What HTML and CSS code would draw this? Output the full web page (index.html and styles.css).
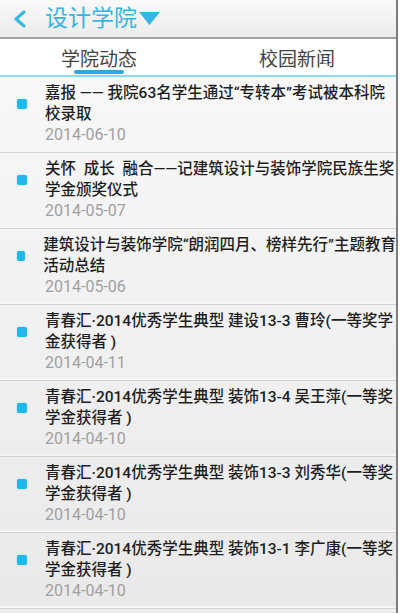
FILE: index.html
```html
<!DOCTYPE html>
<html lang="zh-CN">
<head>
    <meta charset="UTF-8">
    <meta name="viewport" content="width=device-width, initial-scale=1.0">
    <title>设计学院</title>
    <link rel="stylesheet" href="styles.css">
</head>
<body>
    <div class="app">
        <header class="topbar">
            <svg class="back" width="14" height="18" viewBox="0 0 14 18">
                <polyline points="11,2 3,9 11,16" fill="none" stroke="#36b6e2" stroke-width="3" stroke-linecap="round" stroke-linejoin="round"/>
            </svg>
            <h1 class="title">设计学院</h1>
            <svg class="caret" width="21" height="13" viewBox="0 0 21 13">
                <polygon points="0,0 21,0 10.5,13" fill="#36b6e2"/>
            </svg>
        </header>

        <nav class="tabs">
            <div class="tab active"><span>学院动态</span></div>
            <div class="tab"><span>校园新闻</span></div>
        </nav>

        <ul class="news">
            <li class="item">
                <div class="head"><i class="dot"></i><p class="name">嘉报 —— 我院63名学生通过“专转本”考试被本科院<br>校录取</p></div>
                <p class="date">2014-06-10</p>
            </li>
            <li class="item">
                <div class="head"><i class="dot"></i><p class="name">关怀&nbsp; 成长&nbsp; 融合——记建筑设计与装饰学院民族生奖<br>学金颁奖仪式</p></div>
                <p class="date">2014-05-07</p>
            </li>
            <li class="item">
                <div class="head"><i class="dot"></i><p class="name">建筑设计与装饰学院“朗润四月、榜样先行”主题教育<br>活动总结</p></div>
                <p class="date">2014-05-06</p>
            </li>
            <li class="item">
                <div class="head"><i class="dot"></i><p class="name">青春汇·2014优秀学生典型 建设13-3 曹玲(一等奖学<br>金获得者 )</p></div>
                <p class="date">2014-04-11</p>
            </li>
            <li class="item">
                <div class="head"><i class="dot"></i><p class="name">青春汇·2014优秀学生典型 装饰13-4 吴王萍(一等奖<br>学金获得者 )</p></div>
                <p class="date">2014-04-10</p>
            </li>
            <li class="item">
                <div class="head"><i class="dot"></i><p class="name">青春汇·2014优秀学生典型 装饰13-3 刘秀华(一等奖<br>学金获得者 )</p></div>
                <p class="date">2014-04-10</p>
            </li>
            <li class="item">
                <div class="head"><i class="dot"></i><p class="name">青春汇·2014优秀学生典型 装饰13-1 李广康(一等奖<br>学金获得者 )</p></div>
                <p class="date">2014-04-10</p>
            </li>
        </ul>
    </div>
</body>
</html>
```

FILE: styles.css
```css
body {
    margin: 0;
    background: #ffffff;
    font-family: Roboto, "Noto Sans CJK SC", sans-serif;
}

.app {
    width: 396px;
    height: 613px;
    border-right: 2px solid #7d7d7d;
    overflow: hidden;
    background: #ededed;
}

.topbar {
    height: 37px;
    display: flex;
    align-items: center;
    background: linear-gradient(#f9f9f9, #ececec);
    border-bottom: 2px solid #a2a2a2;
}

.back {
    margin-left: 13px;
}

.title {
    margin: 0 0 0 18px;
    font-size: 23px;
    font-weight: normal;
    color: #36b6e2;
    line-height: 1;
}

.caret {
    margin-left: 2px;
}

.tabs {
    display: flex;
    height: 36px;
    background: #ffffff;
    border-bottom: 2px solid #8fdcf2;
}

.tab {
    flex: 1;
    display: flex;
    justify-content: center;
    align-items: center;
    position: relative;
    font-size: 19px;
    color: #444444;
}

.tab.active::after {
    content: "";
    position: absolute;
    bottom: 1px;
    left: 74px;
    width: 50px;
    height: 4px;
    border-radius: 2px;
    background: #2ea7dc;
}

.news {
    list-style: none;
    margin: 0;
    padding: 0;
    background: linear-gradient(#f8f8f8, #e9e9e9);
}

.item {
    height: 76px;
    box-sizing: border-box;
    padding-top: 6px;
    border-bottom: 1px solid #d3d3d3;
    box-shadow: inset 0 -2px 0 #f6f6f6;
}

.head {
    display: flex;
    align-items: center;
}

.dot {
    width: 10px;
    height: 10px;
    margin: 0 18px 0 17px;
    border-radius: 2px;
    background: #1cb9ea;
    box-shadow: 0 0 2px #8ee0f6;
}

.name {
    margin: 0;
    font-size: 15.5px;
    font-weight: 500;
    line-height: 21px;
    color: #1e1e1e;
    white-space: nowrap;
}

.date {
    margin: 0 0 0 45px;
    font-size: 16px;
    line-height: 20px;
    color: #a0a0a0;
}
```
